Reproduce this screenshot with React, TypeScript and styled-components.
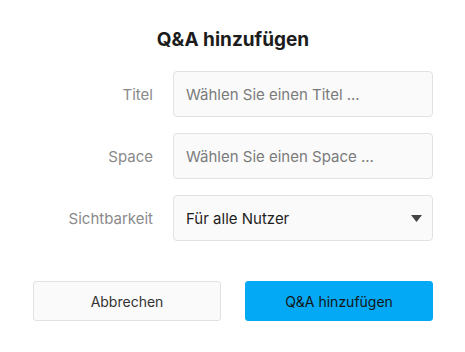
import React from "react";
import styled, { createGlobalStyle } from "styled-components";

const GlobalStyle = createGlobalStyle`
    html, body {
        margin: 0;
        padding: 0;
        background: #ffffff;
    }
    body {
        font-family: Inter, "Noto Sans", "Liberation Sans", sans-serif;
    }
`

const Dialog = styled.div`
    width: 465px;
    height: 352px;
    box-sizing: border-box;
    padding: 28px 32px 0 33px;
    background: #ffffff;
`
const Title = styled.h2`
    margin: 0 0 19px 0;
    font-size: 19px;
    line-height: 24px;
    font-weight: 700;
    color: #1c1c1c;
    text-align: center;
`
const Form = styled.div`
    display: grid;
    grid-template-columns: 120px 260px;
    column-gap: 20px;
    row-gap: 16px;
    align-items: center;
`
const Label = styled.label`
    text-align: right;
    font-size: 15px;
    color: #8a8a8a;
`
const Field = styled.div`
    position: relative;
    height: 46px;
    box-sizing: border-box;
    border: 1px solid #e2e2e2;
    border-radius: 4px;
    background: #fafafa;
    display: flex;
    align-items: center;
    padding: 0 12px;
`
const Input = styled.input`
    width: 100%;
    border: none;
    outline: none;
    background: transparent;
    padding: 0;
    font-family: inherit;
    font-size: 15px;
    color: #222;
    &::placeholder {
        color: #7a7a7a;
    }
`
const SelectValue = styled.span`
    flex: 1;
    font-size: 15px;
    color: #1e1e1e;
`
const Caret = styled.svg`
    width: 11px;
    height: 7px;
    margin-right: -2px;
`
const Actions = styled.div`
    display: grid;
    grid-template-columns: 1fr 1fr;
    column-gap: 24px;
    margin-top: 40px;
`
const Button = styled.button<{ $primary?: boolean }>`
    height: 40px;
    border-radius: 3px;
    font-family: inherit;
    font-size: 14px;
    cursor: pointer;
    color: ${p => (p.$primary ? "#151515" : "#333333")};
    background: ${p => (p.$primary ? "#03a9f4" : "#fafafa")};
    border: 1px solid ${p => (p.$primary ? "#03a9f4" : "#e2e2e2")};
`

const App = () => {
    return (
        <>
            <GlobalStyle />
            <Dialog>
                <Title>Q&amp;A hinzufügen</Title>
                <Form>
                    <Label>Titel</Label>
                    <Field>
                        <Input placeholder="Wählen Sie einen Titel ..." />
                    </Field>
                    <Label>Space</Label>
                    <Field>
                        <Input placeholder="Wählen Sie einen Space ..." />
                    </Field>
                    <Label>Sichtbarkeit</Label>
                    <Field>
                        <SelectValue>Für alle Nutzer</SelectValue>
                        <Caret viewBox="0 0 11 7">
                            <path d="M0 0 H11 L5.5 7 Z" fill="#444" />
                        </Caret>
                    </Field>
                </Form>
                <Actions>
                    <Button>Abbrechen</Button>
                    <Button $primary>Q&amp;A hinzufügen</Button>
                </Actions>
            </Dialog>
        </>
    );
};

export default App;
